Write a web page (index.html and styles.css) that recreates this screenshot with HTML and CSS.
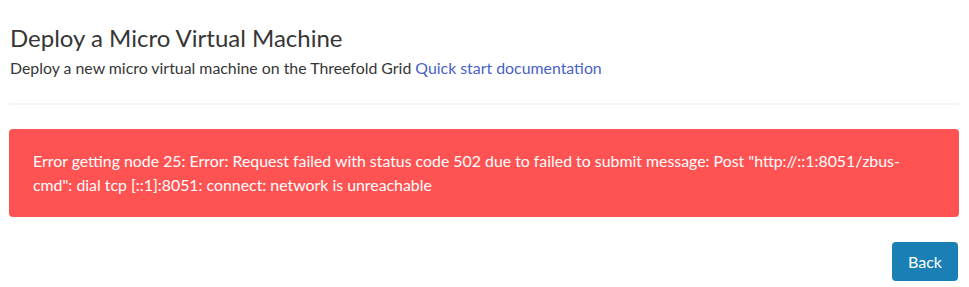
FILE: index.html
```html
<!DOCTYPE html>
<html lang="en">
<head>
    <meta charset="UTF-8">
    <meta name="viewport" content="width=device-width, initial-scale=1.0">
    <title>Deploy a Micro Virtual Machine</title>
    <link rel="stylesheet" href="styles.css">
</head>
<body>
    <div class="page">
        <div class="header">
            <h1 class="title">Deploy a Micro Virtual Machine</h1>
            <p class="subtitle">Deploy a new micro virtual machine on the Threefold Grid <a href="#">Quick start documentation</a></p>
        </div>
        <hr class="divider">
        <div class="notification">
            Error getting node 25: Error: Request failed with status code 502 due to failed to submit message: Post "http://::1:8051/zbus-cmd": dial tcp [::1]:8051: connect: network is unreachable
        </div>
        <div class="actions">
            <button class="button primary">Back</button>
        </div>
    </div>
</body>
</html>
```

FILE: styles.css
```css
body {
    margin: 0;
    font-family: Lato, "Open Sans", sans-serif;
    background-color: #fff;
    color: #4a4a4a;
}

.page {
    padding: 24px 10px 0 9px;
}

.header {
    padding-left: 1px;
}

.title {
    margin: 0;
    font-size: 24px;
    font-weight: 400;
    line-height: 27px;
    color: #363636;
}

.subtitle {
    margin: 5px 0 0;
    font-size: 15.86px;
    line-height: 23px;
    color: #363636;
}

.subtitle a {
    color: #485fc7;
    text-decoration: none;
}

.divider {
    border: none;
    height: 2px;
    background-color: #f5f5f5;
    margin: 24px 0;
}

.notification {
    background-color: #ff5252;
    color: #fff;
    border-radius: 4px;
    padding: 20px 40px 20px 24px;
    font-size: 15.86px;
    line-height: 24px;
}

.actions {
    display: flex;
    justify-content: flex-end;
    margin-top: 25px;
    padding-right: 1px;
}

.button {
    font-family: Lato, "Open Sans", sans-serif;
    font-size: 16px;
    height: 39px;
    padding: 0 15px;
    border: 1px solid transparent;
    border-radius: 4px;
    cursor: pointer;
}

.button.primary {
    background-color: #1a7fb4;
    color: #fff;
}
```
